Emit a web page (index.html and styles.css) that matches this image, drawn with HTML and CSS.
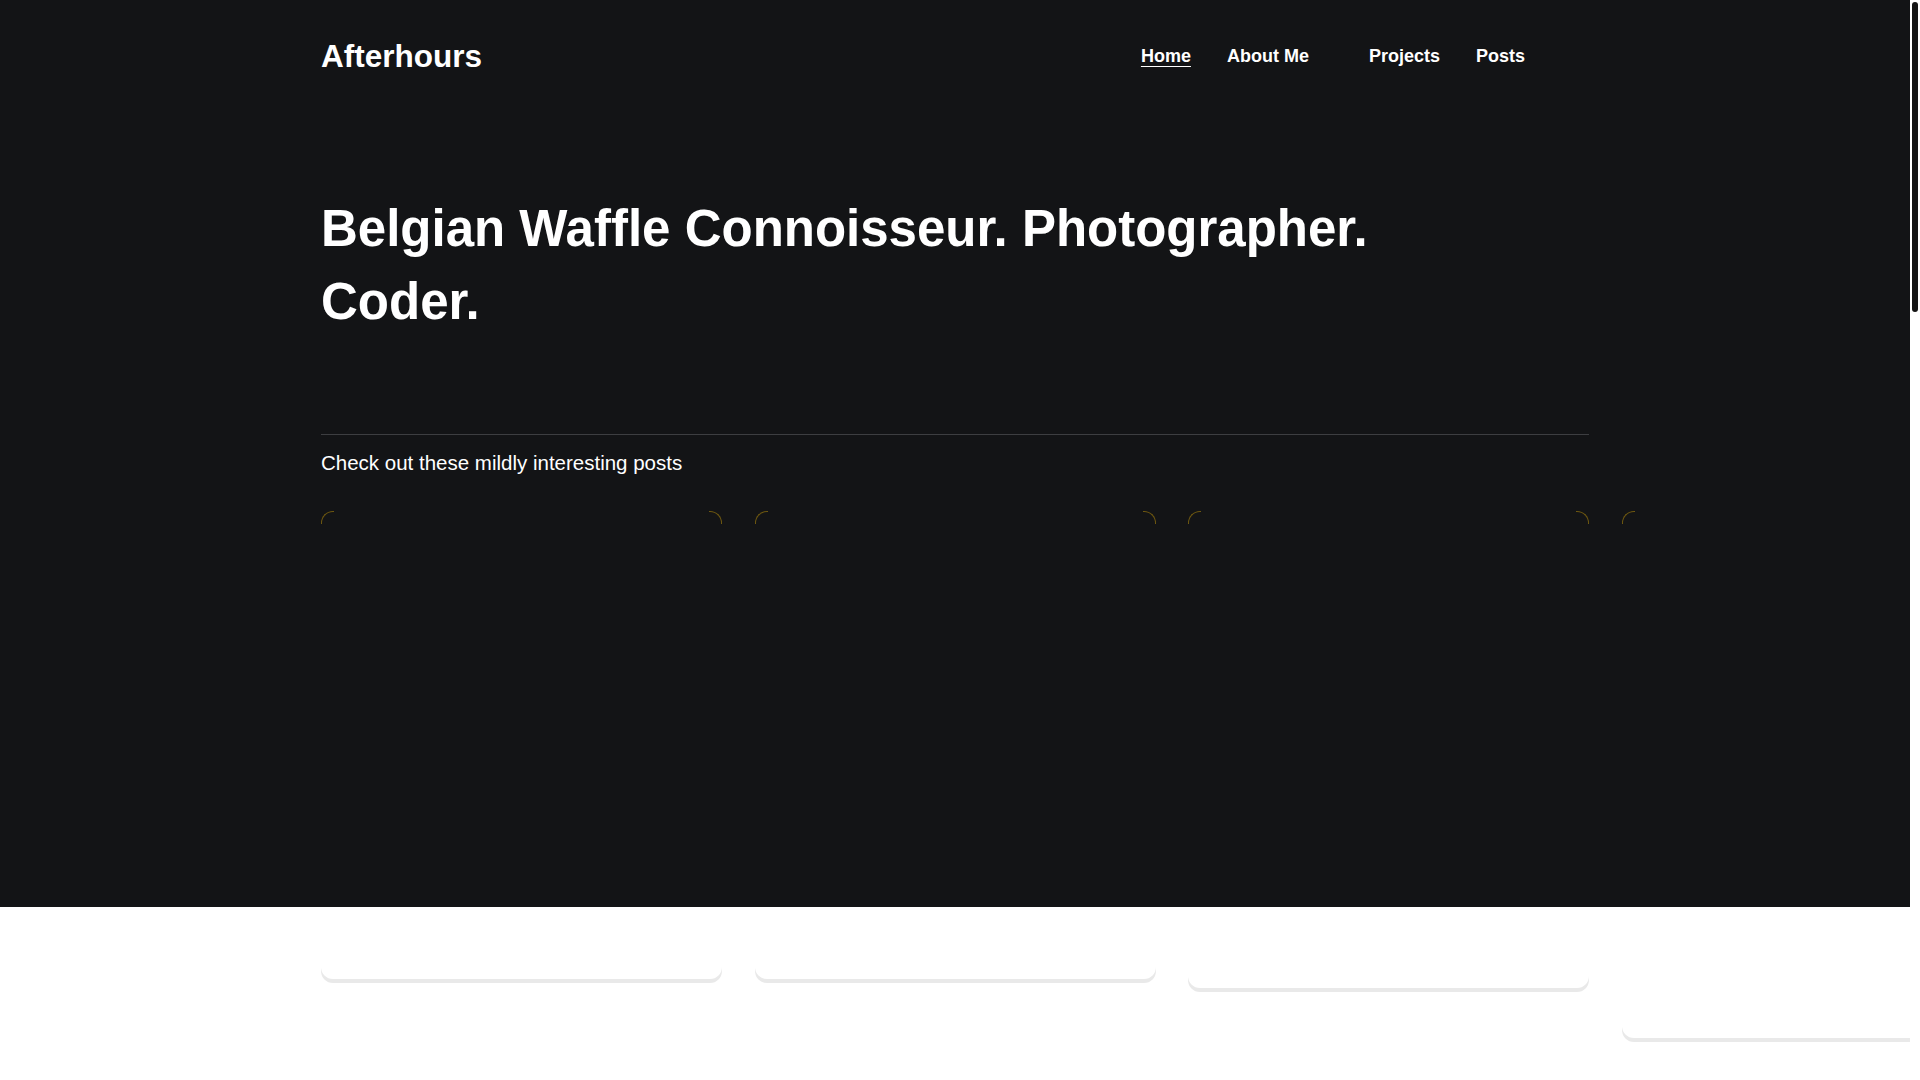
FILE: index.html
```html
<!DOCTYPE html>
<html lang="en">
<head>
    <meta charset="UTF-8">
    <meta name="viewport" content="width=device-width, initial-scale=1.0">
    <title>Afterhours</title>
    <link rel="stylesheet" href="styles.css">
</head>
<body>

<div class="page">
    <div class="hero">
        <div class="container">
            <header class="header">
                <a class="logo" href="#">Afterhours</a>
                <nav class="nav">
                    <a href="#" class="active">Home</a>
                    <a href="#">About Me<span class="caret"></span></a>
                    <a href="#">Projects</a>
                    <a href="#">Posts</a>
                </nav>
            </header>

            <h1 class="title">Belgian Waffle Connoisseur. Photographer.<br>Coder.</h1>

            <hr class="divider">
            <p class="intro">Check out these mildly interesting posts</p>

            <!-- post cards, images still loading -->
            <div class="cards">
                <a href="#" class="card card-a"></a>
                <a href="#" class="card card-a"></a>
                <a href="#" class="card card-b"></a>
                <a href="#" class="card card-c"></a>
            </div>
        </div>
    </div>
</div>

<div class="scrollbar">
    <div class="thumb"></div>
</div>

</body>
</html>
```

FILE: styles.css
```css
html, body {
    margin: 0;
    height: 100%;
    overflow: hidden;
}
body {
    font-family: "Liberation Sans", Arial, sans-serif;
    background-color: #fff;
    display: flex;
}
.page {
    flex: 1;
    overflow: hidden;
}
.hero {
    background-color: #131416;
    height: 907px;
    color: #fff;
}
.container {
    width: 1268px;
    margin: 0 auto;
}
.header {
    height: 112px;
    display: flex;
    align-items: center;
    justify-content: space-between;
}
.logo {
    color: #fff;
    text-decoration: none;
    font-weight: bold;
    font-size: 31.5px;
}
.nav {
    display: flex;
    gap: 36px;
    padding-right: 64px;
}
.nav a {
    color: #fff;
    text-decoration: none;
    font-weight: bold;
    font-size: 18px;
}
.nav a.active {
    text-decoration: underline;
    text-decoration-thickness: 1px;
    text-underline-offset: 4px;
}
.caret {
    display: inline-block;
    width: 24px;
}
.title {
    margin: 80px 0 0;
    font-size: 51px;
    line-height: 73px;
    font-weight: bold;
}
.divider {
    margin: 96px 0 0;
    border: 0;
    border-top: 1px solid #3d3e41;
}
.intro {
    margin: 16px 0 0;
    font-size: 20.5px;
    line-height: 24px;
}
.cards {
    display: flex;
    align-items: flex-start;
    gap: 32.5px;
    margin-top: 36px;
}
.card {
    flex: 0 0 401px;
    position: relative;
    border-radius: 12px;
    box-shadow: 0 4px 0 #e9e9e9;
}
.card-a { height: 468px; }
.card-b { height: 477px; }
.card-c { height: 527px; }
.card::before, .card::after {
    content: "";
    position: absolute;
    top: 0;
    width: 12px;
    height: 12px;
    border-top: 1px solid #6e5810;
}
.card::before {
    left: 0;
    border-left: 1px solid #6e5810;
    border-top-left-radius: 12px;
}
.card::after {
    right: 0;
    border-right: 1px solid #6e5810;
    border-top-right-radius: 12px;
}
.scrollbar {
    flex: 0 0 10px;
    background-color: #fff;
    padding: 2px 2px 0;
    box-sizing: border-box;
}
.thumb {
    height: 310px;
    border-radius: 3px;
    background-color: #141414;
}
```
